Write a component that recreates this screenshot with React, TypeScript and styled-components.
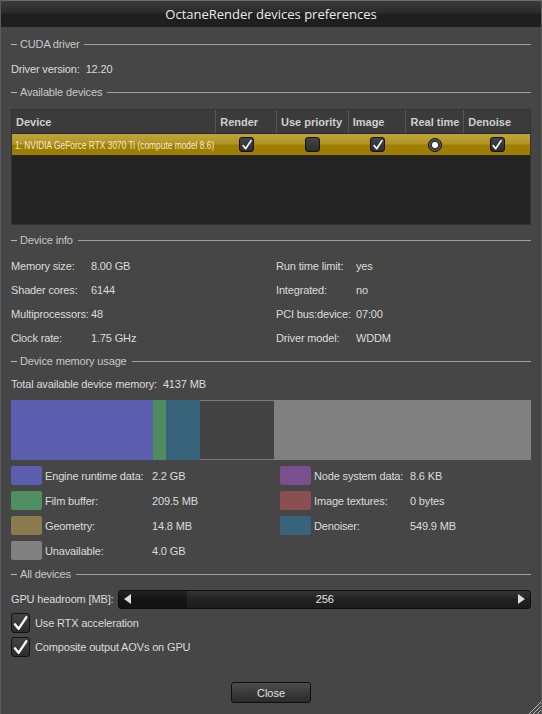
import React from 'react';
import styled, {createGlobalStyle} from 'styled-components';

const GlobalStyle = createGlobalStyle`
  html, body {
    margin: 0;
    padding: 0;
    background: #464646;
  }
  body {
    font-family: "Liberation Sans", Arial, sans-serif;
    font-size: 11px;
    letter-spacing: -0.15px;
    color: #dcdcdc;
  }
`;

const devices = [
  {name: '1: NVIDIA GeForce RTX 3070 Ti (compute model 8.6)', render: true, priority: false, image: true, realtime: true, denoise: true},
];

const columns = [
  {title: 'Device', width: 205},
  {title: 'Render', width: 61},
  {title: 'Use priority', width: 72},
  {title: 'Image', width: 58},
  {title: 'Real time', width: 58},
  {title: 'Denoise', width: 66},
];

const info = [
  ['Memory size:', '8.00 GB', 'Run time limit:', 'yes'],
  ['Shader cores:', '6144', 'Integrated:', 'no'],
  ['Multiprocessors:', '48', 'PCI bus:device:', '07:00'],
  ['Clock rate:', '1.75 GHz', 'Driver model:', 'WDDM'],
];

const segments = [
  {color: '#5b5dae', width: 142},
  {color: '#4f8d5f', width: 13},
  {color: '#37647a', width: 34},
  {color: 'empty', width: 74},
  {color: '#808080', width: 257},
];

const legend = [
  [{color: '#5b5eae', label: 'Engine runtime data:', value: '2.2 GB'}, {color: '#7a4f8e', label: 'Node system data:', value: '8.6 KB'}],
  [{color: '#4f8f60', label: 'Film buffer:', value: '209.5 MB'}, {color: '#8c4e50', label: 'Image textures:', value: '0 bytes'}],
  [{color: '#8a7b4e', label: 'Geometry:', value: '14.8 MB'}, {color: '#37647a', label: 'Denoiser:', value: '549.9 MB'}],
  [{color: '#808080', label: 'Unavailable:', value: '4.0 GB'}, null],
];

const Check = ({size = 15}: {size?: number}) => (
  <svg width={size} height={size} viewBox="0 0 16 16">
    <path d="M2.8 8.8 L6.2 13 L13.4 2.2" fill="none" stroke="#fff" strokeWidth="2.2" strokeLinejoin="round" strokeLinecap="round" />
  </svg>
);

const Section = ({title, $gap = 0}: {title: string; $gap?: number}) => (
  <SectionHeader $gap={$gap}>
    <span className="dash" />
    <span>{title}</span>
    <span className="line" />
  </SectionHeader>
);

const App = () => {
  return (
    <>
      <GlobalStyle />
      <Window>
        <TitleBar>OctaneRender devices preferences</TitleBar>
        <Content>
          <Section title="CUDA driver" />
          <Row $gap={2}>
            <span>Driver version:</span>
            <Value>12.20</Value>
          </Row>
          <Section title="Available devices" />
          <Table>
            <HeaderRow>
              {columns.map((c) => (
                <HeaderCell key={c.title} $w={c.width}>{c.title}</HeaderCell>
              ))}
            </HeaderRow>
            {devices.map((d) => (
              <DeviceRow key={d.name}>
                <NameCell $w={205}><span>{d.name}</span></NameCell>
                <BoxCell $w={61}><Box>{d.render && <Check size={12} />}</Box></BoxCell>
                <BoxCell $w={72}><Box>{d.priority && <Check size={12} />}</Box></BoxCell>
                <BoxCell $w={58}><Box>{d.image && <Check size={12} />}</Box></BoxCell>
                <BoxCell $w={58}><Radio>{d.realtime && <span />}</Radio></BoxCell>
                <BoxCell $w={66}><Box>{d.denoise && <Check size={12} />}</Box></BoxCell>
              </DeviceRow>
            ))}
          </Table>
          <Section title="Device info" $gap={4} />
          <InfoGrid>
            {info.map((r) => (
              <React.Fragment key={r[0]}>
                <span>{r[0]}</span>
                <span>{r[1]}</span>
                <span>{r[2]}</span>
                <span>{r[3]}</span>
              </React.Fragment>
            ))}
          </InfoGrid>
          <Section title="Device memory usage" />
          <Row>
            <span>Total available device memory:</span>
            <Value>4137 MB</Value>
          </Row>
          <MemoryBar>
            {segments.map((s, i) => (
              <Segment key={i} $color={s.color} style={{width: s.width}} />
            ))}
          </MemoryBar>
          <Legend>
            {legend.map((row, i) => (
              <LegendRow key={i}>
                {row.map((item, j) =>
                  item ? (
                    <LegendItem key={j} $right={j === 1}>
                      <Swatch $color={item.color} />
                      <span className="label">{item.label}</span>
                      <span>{item.value}</span>
                    </LegendItem>
                  ) : (
                    <span key={j} />
                  ),
                )}
              </LegendRow>
            ))}
          </Legend>
          <Section title="All devices" />
          <SliderRow>
            <span>GPU headroom [MB]:</span>
            <Slider>
              <SliderFill />
              <Arrow $dir="left" />
              <SliderValue>256</SliderValue>
              <Arrow $dir="right" />
            </Slider>
          </SliderRow>
          <CheckRow>
            <BigBox><Check size={17} /></BigBox>
            <span>Use RTX acceleration</span>
          </CheckRow>
          <CheckRow>
            <BigBox><Check size={17} /></BigBox>
            <span>Composite output AOVs on GPU</span>
          </CheckRow>
          <Footer>
            <Button>Close</Button>
          </Footer>
        </Content>
        <Grip width="16" height="16" viewBox="0 0 16 16">
          <path d="M16 4 L4 16 M16 8 L8 16 M16 12 L12 16" stroke="#bdbdbd" strokeWidth="1" />
        </Grip>
      </Window>
    </>
  );
};

const Window = styled.div`
  position: relative;
  width: 542px;
  height: 714px;
  box-sizing: border-box;
  background: #464646;
  border-left: 1px solid #5a5a5a;
  border-right: 1px solid #5a5a5a;
  overflow: hidden;
`;

const TitleBar = styled.div`
  height: 27px;
  box-sizing: border-box;
  border-top: 1px solid #6a6a6a;
  background: linear-gradient(#3a3a3a 0, #2a2a2a 12px, #1f1f1f 13px, #1f1f1f 100%);
  color: #ececec;
  font-family: "Open Sans", "Liberation Sans", sans-serif;
  font-size: 13px;
  letter-spacing: 0;
  line-height: 26px;
  text-align: center;
`;

const Content = styled.div`
  display: flex;
  flex-direction: column;
  padding: 6px 10px 0 10px;
`;

const SectionHeader = styled.div<{$gap: number}>`
  display: flex;
  align-items: center;
  height: 22px;
  margin-top: ${(p) => p.$gap}px;
  color: #c8c8c8;
  gap: 3px;

  .dash {
    width: 6px;
    height: 1px;
    background: #b8b8b8;
  }

  .line {
    flex: 1;
    height: 1px;
    background: #a0a0a0;
    margin-left: 2px;
  }
`;

const Row = styled.div<{$gap?: number}>`
  display: flex;
  align-items: center;
  height: 24px;
  margin-top: ${(p) => p.$gap || 0}px;
`;

const Value = styled.span`
  margin-left: 6px;
`;

const Table = styled.div`
  margin-top: 6px;
  height: 116px;
  background: #242424;
  border: 1px solid #333;
  box-sizing: border-box;
`;

const HeaderRow = styled.div`
  display: flex;
  height: 23px;
  background: #3b3b3b;
  border-bottom: 1px solid #2a2a2a;
`;

const HeaderCell = styled.div<{$w: number}>`
  width: ${(p) => p.$w}px;
  box-sizing: border-box;
  padding-left: 4px;
  display: flex;
  align-items: center;
  font-weight: bold;
  letter-spacing: 0;
  color: #cfcfcf;
  border-right: 1px solid #555;
  &:last-child {
    border-right: none;
  }
`;

const DeviceRow = styled.div`
  display: flex;
  height: 21px;
  background: linear-gradient(#bfa540 0, #b29520 45%, #9e7e00 55%, #9c7c00 100%);
`;

const NameCell = styled.div<{$w: number}>`
  width: ${(p) => p.$w}px;
  padding-left: 3px;
  box-sizing: border-box;
  display: flex;
  align-items: center;
  color: #f2ecd6;
  white-space: nowrap;
  overflow: hidden;
  letter-spacing: 0;

  span {
    display: inline-block;
    transform: scaleX(0.76);
    transform-origin: left center;
  }
`;

const BoxCell = styled.div<{$w: number}>`
  width: ${(p) => p.$w}px;
  display: flex;
  align-items: center;
  justify-content: center;
`;

const Box = styled.div`
  width: 13px;
  height: 13px;
  border: 1px solid #111;
  border-radius: 3px;
  background: linear-gradient(#444, #2e2e2e);
  display: flex;
  align-items: center;
  justify-content: center;
`;

const Radio = styled.div`
  width: 12px;
  height: 12px;
  border-radius: 50%;
  border: 1px solid #111;
  background: #3a3a3a;
  box-shadow: inset 0 0 0 1px #666;
  display: flex;
  align-items: center;
  justify-content: center;

  span {
    width: 6px;
    height: 6px;
    border-radius: 50%;
    background: #fff;
  }
`;

const InfoGrid = styled.div`
  display: grid;
  grid-template-columns: 80px 185px 80px 1fr;
  grid-auto-rows: 24px;
  align-items: center;
  margin-top: 3px;
`;

const MemoryBar = styled.div`
  display: flex;
  height: 60px;
  margin-top: 4px;
`;

const Segment = styled.div<{$color: string}>`
  height: 100%;
  box-sizing: border-box;
  background: ${(p) => (p.$color === 'empty' ? '#424242' : p.$color)};
  ${(p) => (p.$color === 'empty' ? 'border-top: 1px solid #7a7a7a; border-bottom: 1px solid #7a7a7a;' : '')}
`;

const Legend = styled.div`
  display: flex;
  flex-direction: column;
  margin-top: 3px;
`;

const LegendRow = styled.div`
  display: grid;
  grid-template-columns: 269px 1fr;
  height: 25px;
  align-items: center;
`;

const LegendItem = styled.div<{$right: boolean}>`
  display: flex;
  align-items: center;

  .label {
    width: ${(p) => (p.$right ? 96 : 107)}px;
    margin-left: 3px;
  }
`;

const Swatch = styled.div<{$color: string}>`
  width: 31px;
  height: 19px;
  border-radius: 2px;
  background: ${(p) => p.$color};
`;

const SliderRow = styled.div`
  display: flex;
  align-items: center;
  height: 24px;
  margin-top: 2px;
  gap: 5px;
`;

const Slider = styled.div`
  position: relative;
  flex: 1;
  height: 19px;
  box-sizing: border-box;
  border: 1px solid #0e0e0e;
  border-radius: 3px;
  background: linear-gradient(#343434, #222 50%, #1c1c1c);
  display: flex;
  align-items: center;
  justify-content: space-between;
  padding: 0 5px;
  overflow: hidden;
`;

const SliderFill = styled.div`
  position: absolute;
  left: 0;
  top: 0;
  bottom: 0;
  width: 68px;
  background: linear-gradient(#222, #141414 50%, #121212);
`;

const SliderValue = styled.span`
  position: relative;
  color: #e6e6e6;
`;

const Arrow = styled.span<{$dir: 'left' | 'right'}>`
  position: relative;
  width: 0;
  height: 0;
  border-top: 5px solid transparent;
  border-bottom: 5px solid transparent;
  ${(p) => (p.$dir === 'left' ? 'border-right: 7px solid #ddd;' : 'border-left: 7px solid #ddd;')}
`;

const CheckRow = styled.div`
  display: flex;
  align-items: center;
  height: 24px;
  gap: 5px;
`;

const BigBox = styled.div`
  width: 17px;
  height: 18px;
  border: 1px solid #111;
  border-radius: 3px;
  background: linear-gradient(#444, #2c2c2c);
  display: flex;
  align-items: center;
  justify-content: center;
`;

const Footer = styled.div`
  display: flex;
  justify-content: center;
  margin-top: 23px;
`;

const Button = styled.button`
  width: 80px;
  height: 21px;
  border: 1px solid #0e0e0e;
  border-radius: 3px;
  background: linear-gradient(#4e4e4e, #3a3a3a 50%, #2c2c2c);
  color: #e0e0e0;
  font-family: "Liberation Sans", Arial, sans-serif;
  font-size: 11px;
  padding: 0;
`;

const Grip = styled.svg`
  position: absolute;
  right: 0;
  bottom: 0;
`;

export default App;
